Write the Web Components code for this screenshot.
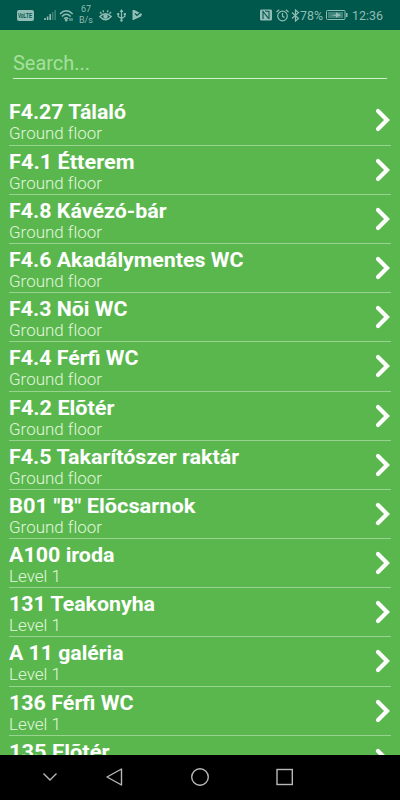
<!DOCTYPE html>
<html lang="hu">
<head>
<meta charset="utf-8">
<title>Rooms</title>
<style>
	html, body {
		height: 100%;
		margin: 0;
		overflow: hidden;
	}
</style>
</head>
<body>
<room-app></room-app>

<script>
/**
 * Text on one line, squeezed or stretched to a given width
 * @attribute [width] The width of the text in pixels
 */
class FitText extends HTMLElement {
	constructor() {
		super();
		this.attachShadow({mode: 'open'});
		this.shadowRoot.innerHTML = `
		<style>
			:host {
				display: block;
				white-space: nowrap;
			}

			span {
				display: inline-block;
				transform-origin: 0 50%;
			}
		</style>
		<span><slot></slot></span>
		`;
	}

	connectedCallback() {
		this.fit();
	}

	fit() {
		const span = this.shadowRoot.querySelector('span');
		const width = Number(this.getAttribute('width'));
		span.style.transform = '';
		const natural = span.getBoundingClientRect().width;
		if (width && natural) span.style.transform = `scaleX(${width / natural})`;
	}
}

class StatusBar extends HTMLElement {
	constructor() {
		super();
		this.attachShadow({mode: 'open'});
		this.shadowRoot.innerHTML = `
		<style>
			:host {
				align-items: center;
				background: #00574b;
				box-sizing: border-box;
				color: #91bdb6;
				display: flex;
				height: 30px;
				justify-content: space-between;
				padding: 0 17px;
			}

			div {
				align-items: center;
				display: flex;
			}

			svg {
				display: block;
				fill: none;
				stroke: currentColor;
			}

			.volte {
				background: #91bdb6;
				border-radius: 2px;
				color: #00574b;
				font: bold 7px/11px "Liberation Sans", sans-serif;
				height: 11px;
				margin-right: 10px;
				padding-left: 1px;
				width: 16px;
			}

			.speed {
				display: block;
				font-size: 9px;
				line-height: 11px;
				margin: 0 6px 0 5px;
				text-align: center;
				width: 14px;
			}

			.text {
				font-size: 13px;
				line-height: 16px;
				padding-top: 1px;
			}
		</style>
		<div>
			<span class="volte"><fit-text width="14">VoLTE</fit-text></span>
			<svg width="12" height="12" stroke-width="1.6"><path d="M1 11V9M3.6 11V7.5M6.2 11V5"/><path opacity=".4" d="M8.7 11V3M11.2 11V1"/></svg>
			<svg width="15" height="13" stroke-width="1.5" style="margin-left:3px"><path d="M1 5Q7.3-1.5 13.7 5M3 7.5Q7.3 3 11.7 7.5M5 9.8Q7.3 7.8 9.3 9.8"/><circle cx="7.2" cy="11.2" r=".6"/><path stroke-width="1" d="M11 9v3M13 9v3"/></svg>
			<span class="speed">67<br>B/s</span>
			<svg width="13" height="13" stroke-width="1.3"><path d="M.8 7.5Q6.5 2 12.2 7.5Q6.5 14 .8 7.5zM1 3l1.5 1.7M4 1.3l.6 2M9 1.3l-.6 2M12 3l-1.5 1.7"/><circle cx="6.5" cy="7.5" r="1.6" fill="currentColor"/></svg>
			<svg width="9" height="13" stroke-width="1.2" style="margin-left:5px"><path d="M4.5 2v10M1.2 5v2.5l3.3 2 3.3-2V5"/><path fill="currentColor" stroke="none" d="M4.5 0l2 3h-4zM.2 4h2v2h-2zM6.8 4h2v2h-2z"/><circle cx="4.5" cy="11.5" r="1.2" fill="currentColor" stroke="none"/></svg>
			<svg width="11" height="12" style="margin-left:6px"><path fill="currentColor" stroke="none" d="M.5 1h2l7.5 4-1 2.5L1.5 11h-1z"/><path stroke="#00574b" stroke-width="1.1" d="M3 4.5l2 2L9.5 2.5"/></svg>
		</div>
		<div>
			<svg width="12" height="12"><path fill="currentColor" stroke="none" d="M0 1.5Q0 .5 1.5.5h9q1.5 0 1.5 1v9q0 1-1.5 1h-9Q0 11.5 0 10.5z"/><path stroke="#00574b" stroke-width="1.1" d="M3 10V2.5l5.5 6.8M5 2l4 .5V10"/></svg>
			<svg width="13" height="13" stroke-width="1.2" style="margin-left:4px"><circle cx="6.5" cy="7" r="4.8"/><path d="M6.5 4v3.3l2 1.2M.5 3l2.7-2.3M12.5 3L9.8.7"/></svg>
			<svg width="9" height="13" stroke-width="1.2" style="margin-left:2px"><path d="M1 3.5l6.5 6L4.5 12V1l3 2.5L1 9.5"/></svg>
			<fit-text class="text" width="23" style="width:24px">78%</fit-text>
			<svg width="22" height="12" style="margin-left:2px"><rect x=".5" y="1.5" width="18.5" height="9" rx="1"/><path fill="currentColor" stroke="none" opacity=".45" d="M2 3h15v6H2z"/><path fill="currentColor" stroke="none" d="M20 4h1.5v4H20zM5 6.2l5-.7V3.3L15 6l-5 2.7V7z"/></svg>
			<fit-text class="text" width="31" style="margin-left:4px;width:31px">12:36</fit-text>
		</div>
		`;
	}
}

class SearchField extends HTMLElement {
	constructor() {
		super();
		this.attachShadow({mode: 'open'});
		this.shadowRoot.innerHTML = `
		<style>
			:host {
				border-bottom: 1px solid #d0f2cb;
				box-sizing: border-box;
				color: #a5e09d;
				display: block;
				font-size: 20px;
				height: 27px;
				line-height: 23px;
				margin: 22px 13px 17.4px;
				flex: none;
			}
		</style>
		<fit-text width="77"><slot></slot></fit-text>
		`;
	}
}

/**
 * One room of the list
 * @attribute name, floor The two lines of text
 * @attribute width The width of the name in pixels
 */
class RoomRow extends HTMLElement {
	connectedCallback() {
		const floor = this.getAttribute('floor');
		this.attachShadow({mode: 'open'});
		this.shadowRoot.innerHTML = `
		<style>
			:host {
				border-bottom: 1px solid #98d48f;
				box-sizing: border-box;
				display: flex;
				flex: none;
				height: 49.2px;
				justify-content: space-between;
			}

			.name {
				color: #fff;
				font-size: 20.5px;
				font-weight: 700;
				line-height: 24px;
				padding-top: 4px;
			}

			.floor {
				color: #e0f6dc;
				font-size: 16.5px;
				font-variant-ligatures: none;
				font-weight: 300;
				line-height: 18px;
				padding-top: 1px;
			}

			svg {
				fill: none;
				margin-top: 12px;
				stroke: #fff;
				stroke-linecap: round;
				stroke-width: 4.2;
			}
		</style>
		<div>
			<fit-text class="name" width="${this.getAttribute('width')}"></fit-text>
			<fit-text class="floor" width="${floor === 'Level 1' ? 52 : 93}">${floor}</fit-text>
		</div>
		<svg width="16" height="24"><path d="M3 3l9 9-9 9"/></svg>
		`;
		const name = this.shadowRoot.querySelector('.name');
		name.textContent = this.getAttribute('name');
		name.fit();
	}
}

class NavBar extends HTMLElement {
	constructor() {
		super();
		this.attachShadow({mode: 'open'});
		this.shadowRoot.innerHTML = `
		<style>
			:host {
				background: #000;
				display: block;
			}

			svg {
				display: block;
				fill: none;
				stroke: #b8b8b8;
				stroke-width: 1.4;
			}
		</style>
		<svg width="400" height="45">
			<path d="M43.5 18.5l6.5 6.5 6.5-6.5"/>
			<path stroke-linejoin="round" d="M107 22l14.5-8v16z"/>
			<circle cx="200" cy="22" r="8.3"/>
			<rect x="277" y="14.5" width="15.3" height="15"/>
		</svg>
		`;
	}
}

class RoomApp extends HTMLElement {
	rooms = [
		['F4.27 Tálaló', 'Ground floor', 117],
		['F4.1 Étterem', 'Ground floor', 125.5],
		['F4.8 Kávézó-bár', 'Ground floor', 157.5],
		['F4.6 Akadálymentes WC', 'Ground floor', 234.5],
		['F4.3 Nõi WC', 'Ground floor', 118.5],
		['F4.4 Férfi WC', 'Ground floor', 129.5],
		['F4.2 Elõtér', 'Ground floor', 105.5],
		['F4.5 Takarítószer raktár', 'Ground floor', 230],
		['B01 "B" Elõcsarnok', 'Ground floor', 186.5],
		['A100 iroda', 'Level 1', 105.5],
		['131 Teakonyha', 'Level 1', 146],
		['A 11 galéria', 'Level 1', 114.5],
		['136 Férfi WC', 'Level 1', 124.5],
		['135 Elõtér', '', 100.5]
	];

	connectedCallback() {
		this.attachShadow({mode: 'open'});
		this.shadowRoot.innerHTML = `
		<style>
			:host {
				background: #5ab74e;
				display: grid;
				font-family: Roboto, sans-serif;
				grid-template-rows: 30px 1fr 45px;
				height: 100vh;
			}

			main {
				display: flex;
				flex-direction: column;
				min-height: 0;
				overflow: hidden;
			}

			section {
				display: flex;
				flex-direction: column;
				padding: 0 9px;
			}
		</style>
		<status-bar></status-bar>
		<main>
			<search-field>Search...</search-field>
			<section></section>
		</main>
		<nav-bar></nav-bar>
		`;
		const list = this.shadowRoot.querySelector('section');
		for (const [name, floor, width] of this.rooms) {
			const row = document.createElement('room-row');
			row.setAttribute('name', name);
			row.setAttribute('floor', floor);
			row.setAttribute('width', width);
			list.append(row);
		}
	}
}

customElements.define('fit-text', FitText);
customElements.define('status-bar', StatusBar);
customElements.define('search-field', SearchField);
customElements.define('room-row', RoomRow);
customElements.define('nav-bar', NavBar);
customElements.define('room-app', RoomApp);
</script>
</body>
</html>
